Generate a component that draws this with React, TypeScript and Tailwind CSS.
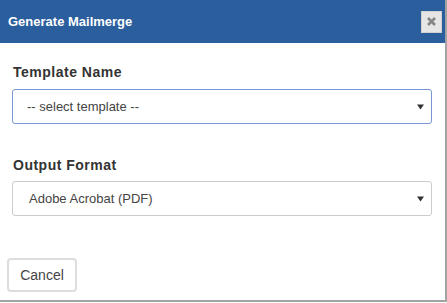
import React from "react";

function Caret() {
  return (
    <svg width="7" height="6" viewBox="0 0 7 6" className="shrink-0">
      <path d="M0 0.5 L7 0.5 L3.5 5.5 Z" fill="#333" />
    </svg>
  );
}

function FakeSelect({ value, focused, indent }: { value: string; focused?: boolean; indent: string }) {
  return (
    <div
      className={
        "ml-[12px] w-[420px] h-[35px] rounded-[3px] border bg-white flex items-center justify-between pr-[7px] text-[13px] text-[#444] " +
        indent +
        (focused ? " border-[#7896d2]" : " border-[#cccccc]")
      }
    >
      <span>{value}</span>
      <Caret />
    </div>
  );
}

export default function App() {
  return (
    <div className="w-[447px] h-[302px] bg-white border-r-2 border-b-2 border-[#a3a3a3] font-['Liberation_Sans',Arial,sans-serif] overflow-hidden">
      <div className="h-[43px] bg-[#2b5e9d] flex items-center justify-between pl-[8px] pr-[3px]">
        <span className="text-white text-[13px] font-bold">Generate Mailmerge</span>
        <button className="w-[21px] h-[22px] bg-[#e6e6e6] border border-[#d0d0d0] flex items-center justify-center">
          <svg width="9" height="9" viewBox="0 0 9 9">
            <path d="M1 1 L8 8 M8 1 L1 8" stroke="#858585" strokeWidth="2.6" />
          </svg>
        </button>
      </div>

      <div className="pt-[19px]">
        <div className="pl-[13px] h-[20px] leading-[20px] text-[14px] font-bold tracking-[0.5px] text-[#333]">
          Template Name
        </div>
        <div className="mt-[7px]">
          <FakeSelect value="-- select template --" focused indent="pl-[14px]" />
        </div>

        <div className="mt-[31px] pl-[13px] h-[20px] leading-[20px] text-[14px] font-bold tracking-[0.5px] text-[#333]">
          Output Format
        </div>
        <div className="mt-[6px]">
          <FakeSelect value="Adobe Acrobat (PDF)" indent="pl-[16px]" />
        </div>

        <div className="mt-[42px] pl-[7px]">
          <button className="w-[70px] h-[34px] rounded-[4px] border-2 border-[#dddddd] bg-white text-[14px] text-[#444]">
            Cancel
          </button>
        </div>
      </div>
    </div>
  );
}
